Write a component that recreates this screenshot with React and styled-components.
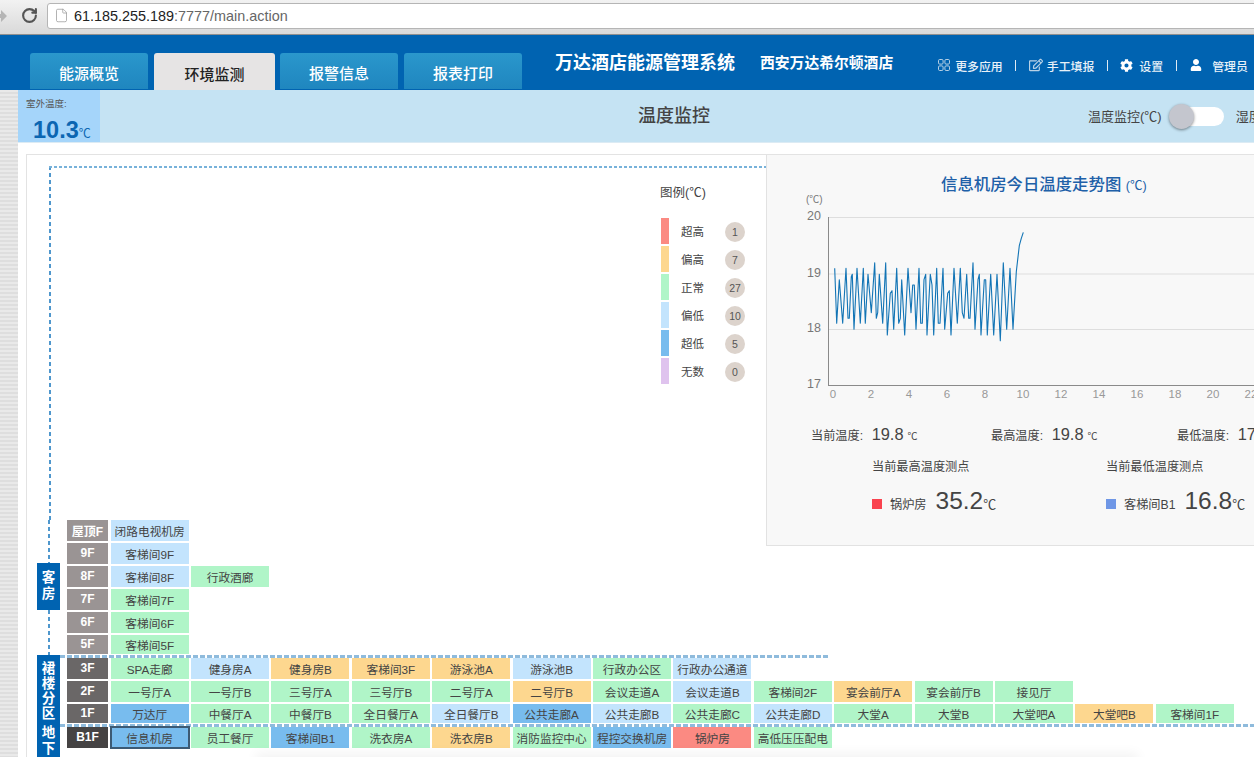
import React from 'react';
import styled, { createGlobalStyle } from 'styled-components';
import { FaCog, FaUser, FaRegEdit } from 'react-icons/fa';
import { RotateCw, File } from 'lucide-react';

const Global = createGlobalStyle`
  html, body { margin: 0; padding: 0; background: #fff; overflow: hidden; }
  * { box-sizing: border-box; }
  body { font-family: "Liberation Sans", "Noto Sans CJK SC", sans-serif; color: #444; }
`;

const COLORS = { R: '#fb8a82', O: '#fdd78f', G: '#b0f5c8', L: '#c3e4fd', B: '#78bcee', P: '#dfc3ee' };

const Page = styled.div`
  width: 1254px; height: 757px; overflow: hidden; position: relative;
  display: flex; flex-direction: column; background: #fff;
`;
const Browser = styled.div`
  height: 35px; flex: none; display: flex; align-items: center; padding-bottom: 3px;
  background: linear-gradient(#f2f2f2, #d9d9d9); border-bottom: 1px solid #8f8f8f; overflow: hidden;
`;
const BackArrow = styled.svg`width: 10px; height: 14px; margin-left: -3px; flex: none;`;
const Reload = styled(RotateCw)`margin-left: 14px; color: #555; flex: none;`;
const UrlBox = styled.div`
  margin-left: 9px; flex: 1; margin-right: -10px; height: 26px; background: #fff;
  border: 1px solid #b5b5b5; border-radius: 3px; display: flex; align-items: center; padding-left: 6px;
`;
const DocIcon = styled(File)`color: #999; flex: none;`;
const Url = styled.div`margin-left: 5px; font-size: 14.4px; color: #666; b { font-weight: 400; color: #222; }`;

const Header = styled.div`
  height: 55px; flex: none; background: #0063b1; display: flex; align-items: flex-end; padding-left: 30px; position: relative;
`;
const Tabs = styled.div`display: flex; gap: 6px;`;
const Tab = styled.div`
  width: ${p => (p.$active ? 121 : 118)}px; height: ${p => (p.$active ? 37 : 36)}px;
  margin-right: ${p => (p.$active ? -1 : 0)}px;
  border-radius: 3px 3px 0 0; display: flex; align-items: center; justify-content: center;
  font-size: 15px; padding-top: 3px; font-weight: 500;
  background: ${p => (p.$active ? '#e6e4e4' : 'linear-gradient(#2a97cc, #1f86bf)')};
  color: ${p => (p.$active ? '#222' : '#fff')};
`;
const Brand = styled.div`
  margin-left: 33px; align-self: flex-start; margin-top: 16px; font-size: 18px; font-weight: 700; color: #fff; line-height: 24px; white-space: nowrap;
`;
const Hotel = styled.div`
  margin-left: 25px; align-self: flex-start; margin-top: 17px; font-size: 14.8px; font-weight: 700; color: #fff; line-height: 22px; white-space: nowrap;
`;
const Nav = styled.div`
  margin-left: 45px; align-self: flex-start; margin-top: 21px; display: flex; align-items: center; height: 18px;
  color: #e8f1f8; font-size: 11.9px; font-weight: 500; white-space: nowrap;
`;
const NavItem = styled.div`display: flex; align-items: center; gap: ${p => p.$gap}px;`;
const NavSep = styled.div`width: 1px; height: 11px; background: #dfeaf3; margin: 0 ${p => p.$m}px;`;
const GridIcon = styled.svg`width: 12px; height: 12px; flex: none; color: #b9d2e6;`;

const Body = styled.div`flex: 1; display: flex; min-height: 0;`;
const Gutter = styled.div`
  width: 18px; flex: none;
  background: repeating-linear-gradient(180deg, #e9e9e9 0 2px, #dedede 2px 4px);
`;
const Main = styled.div`flex: 1; min-width: 0; display: flex; flex-direction: column; overflow: hidden;`;
const SubBar = styled.div`
  height: 53px; flex: none; display: flex; background: #c5e3f3; overflow: hidden; border-bottom: 1px solid #dcebf4;
`;
const Outdoor = styled.div`
  width: 82px; flex: none; background: #a5d5fa; padding: 8px 0 0 8px; position: relative;
`;
const OutdoorLabel = styled.div`font-size: 9.5px; color: #555; line-height: 12px;`;
const OutdoorValue = styled.div`
  margin: 7px 0 0 7px; color: #0b66b2; font-size: 23.5px; font-weight: 700; line-height: 26px; white-space: nowrap;
  span { font-size: 12px; font-weight: 400; }
`;
const SubTitle = styled.div`
  margin-left: 538px; width: 73px; flex: none; font-size: 18px; font-weight: 500; color: #444; line-height: 52px; white-space: nowrap;
`;
const Switcher = styled.div`
  margin-left: 377px; flex: none; display: flex; align-items: center; height: 52px; font-size: 13px; color: #444; white-space: nowrap;
`;
const SwitcherLabel = styled.span`margin-top: -1px;`;
const SwitchTrack = styled.div`
  width: 54px; height: 19px; background: #fff; border-radius: 10px; margin: 0 12px 0 8px; position: relative;
`;
const SwitchKnob = styled.div`
  position: absolute; left: -1px; top: -3px; width: 25px; height: 25px; border-radius: 50%;
  background: #c4c6ce; box-shadow: 0 1px 3px rgba(0,0,0,.45);
`;
const Content = styled.div`flex: 1; padding: 11px 0 0 8px; min-height: 0;`;
const Card = styled.div`
  height: 700px; width: 1400px; border: 1px solid #e3e3e3; border-right: 0;
  display: flex; flex-direction: column;
`;
const Top = styled.div`height: 365px; flex: none; display: flex;`;
const Canvas = styled.div`
  margin: 11px 0 0 22px; width: 717px; height: 354px; flex: none; padding: 18px 0 0 612px; position: relative;
  background:
    repeating-linear-gradient(90deg, #78b2da 0 3px, transparent 3px 5px) top left / 100% 2px no-repeat,
    repeating-linear-gradient(180deg, #4f97cd 0 4px, transparent 4px 7px) top left / 2px 100% no-repeat;
`;
const LegendTitle = styled.div`margin-left: -1px; font-size: 12.5px; color: #444; line-height: 18px; white-space: nowrap;`;
const Legend = styled.div`margin-top: 16px; display: flex; flex-direction: column; gap: 2px;`;
const LegendRow = styled.div`display: flex; align-items: center; height: 26px;`;
const LegendBar = styled.div`width: 8px; height: 26px; background: ${p => p.$c};`;
const LegendLabel = styled.div`margin-left: 12px; width: 44px; font-size: 11.5px; color: #444;`;
const LegendBadge = styled.div`
  width: 20px; height: 20px; border-radius: 50%; background: #dcd3cc; font-size: 10.5px; color: #555;
  display: flex; align-items: center; justify-content: center; margin-top: 1px;
`;

const ChartPanel = styled.div`
  width: 560px; height: 391px; flex: none; background: #f8f8f8;
  border-left: 1px solid #e2e2e2; border-bottom: 1px solid #e2e2e2; position: relative; z-index: 1;
`;
const ChartTitle = styled.div`
  margin-top: 17px; padding-left: 174px; font-size: 16.4px; font-weight: 500; color: #2060a8; line-height: 24px; white-space: nowrap;
  span { font-size: 12.5px; font-weight: 400; }
`;
const ChartSvg = styled.svg`display: block; margin: -8px 0 0 23px; width: 530px; height: 215px;`;
const Stats = styled.div`display: flex; margin-top: 20px; padding-left: 44px; align-items: baseline;`;
const Stat = styled.div`width: ${p => p.$w}px; flex: none; font-size: 12.2px; color: #444; white-space: nowrap;
  b { font-weight: 400; font-size: 16.4px; margin: 0 4px 0 8.5px; }
  i { font-style: normal; font-size: 10px; }
`;
const Extremes = styled.div`display: flex; padding-left: 105px; margin-top: 15px;`;
const Extreme = styled.div`width: 234px; flex: none;`;
const ExtremeTitle = styled.div`font-size: 12.2px; color: #444; line-height: 16px; white-space: nowrap;`;
const ExtremeRow = styled.div`display: flex; align-items: baseline; margin-top: 12px; white-space: nowrap; position: relative;`;
const Swatch = styled.div`width: 10px; height: 10px; background: ${p => p.$c}; margin-right: 8px; flex: none;`;
const ExtremeName = styled.div`font-size: 12.2px; color: #444;`;
const ExtremeValue = styled.div`margin-left: 9px; font-size: 24.5px; color: #444; line-height: 28px;`;
const ExtremeUnit = styled.div`font-size: 13px; color: #444;`;

const Section = styled.div`display: flex; flex: none; height: ${p => p.$h}px; margin-left: 10px;`;
const ZoneCol = styled.div`width: 23px; flex: none; display: flex; flex-direction: column;`;
const DashStem = styled.div`
  height: ${p => p.$h}px; flex: none; margin-left: 11px; width: 2px;
  background: repeating-linear-gradient(180deg, #4f97cd 0 4px, transparent 4px 7px);
`;
const Zone = styled.div`
  width: 23px; flex: ${p => (p.$h ? 'none' : 1)}; height: ${p => (p.$h ? `${p.$h}px` : 'auto')}; background: #0063b1; color: #fff; text-align: center;
  font-size: 13.5px; font-weight: 700; line-height: ${p => p.$lh}px; padding: ${p => p.$pt}px 4px 0;
`;
const Rows = styled.div`flex: 1; min-width: 0; display: flex; flex-direction: column;`;
const Divider = styled.div`
  height: 3px; flex: none; width: ${p => p.$w}px;
  background: repeating-linear-gradient(90deg, #8fbbdc 0 5px, transparent 5px 7px);
`;
const RowList = styled.div`padding-left: 7px; display: flex; flex-direction: column; gap: 2px;`;
const Row = styled.div`display: flex; height: ${p => p.$h || 21}px; gap: 2.4px;`;
const Floor = styled.div`
  width: 41px; margin-right: 0.3px; flex: none; background: ${p => p.$bg}; color: #fff; font-weight: 700; padding-bottom: 1px;
  font-size: 12px; display: flex; align-items: center; justify-content: center; white-space: nowrap;
`;
const Cell = styled.div`
  width: 78px; flex: none; background: ${p => COLORS[p.$c]}; color: #444; font-size: 11.7px; padding-bottom: 1px;
  display: flex; align-items: center; justify-content: center; white-space: nowrap;
  ${p => p.$sel && 'box-shadow: inset 0 0 0 1px #3c5a74; outline: 1px solid #3c5a74;'}
`;
const BottomShade = styled.div`
  position: absolute; left: 260px; right: 120px; bottom: -6px; height: 6px; pointer-events: none;
  box-shadow: 0 0 12px 4px rgba(0,0,0,.05);
`;

const upper = [
  ['屋顶F', [['闭路电视机房', 'L']]],
  ['9F', [['客梯间9F', 'L']]],
  ['8F', [['客梯间8F', 'L'], ['行政酒廊', 'G']]],
  ['7F', [['客梯间7F', 'G']]],
  ['6F', [['客梯间6F', 'G']]],
  ['5F', [['客梯间5F', 'G']], 19],
];
const podium = [
  ['3F', [['SPA走廊','G'],['健身房A','L'],['健身房B','O'],['客梯间3F','O'],['游泳池A','O'],['游泳池B','L'],['行政办公区','G'],['行政办公通道','L']]],
  ['2F', [['一号厅A','G'],['一号厅B','G'],['三号厅A','G'],['三号厅B','G'],['二号厅A','G'],['二号厅B','O'],['会议走道A','G'],['会议走道B','L'],['客梯间2F','G'],['宴会前厅A','O'],['宴会前厅B','G'],['接见厅','G']]],
  ['1F', [['万达厅','B'],['中餐厅A','G'],['中餐厅B','G'],['全日餐厅A','G'],['全日餐厅B','L'],['公共走廊A','B'],['公共走廊B','L'],['公共走廊C','G'],['公共走廊D','L'],['大堂A','G'],['大堂B','G'],['大堂吧A','G'],['大堂吧B','O'],['客梯间1F','G']], 19],
];
const basement = [
  ['B1F', [['信息机房','B',true],['员工餐厅','G'],['客梯间B1','B'],['洗衣房A','G'],['洗衣房B','O'],['消防监控中心','G'],['程控交换机房','B'],['锅炉房','R'],['高低压压配电','G']]],
];

const legend = [['超高','R',1],['偏高','O',7],['正常','G',27],['偏低','L',10],['超低','B',5],['无数','P',0]];

const raw = [[44,190],[50,355],[58,224],[68,355],[78,190],[84,340],[88,340],[94,215],[97,208],[102,373],[111,190],[121,355],[130,190],[136,355],[144,208],[154,323],[164,173],[169,340],[173,323],[178,208],[188,355],[197,173],[202,390],[211,265],[216,257],[221,373],[230,190],[236,355],[241,340],[245,224],[254,390],[264,190],[273,323],[278,240],[283,240],[288,373],[297,190],[302,355],[307,355],[312,224],[317,208],[321,390],[331,208],[336,240],[341,390],[350,190],[355,355],[360,355],[369,190],[374,373],[383,265],[388,257],[393,390],[402,190],[412,355],[421,190],[427,323],[432,340],[440,208],[446,340],[450,340],[459,173],[465,373],[474,224],[478,208],[483,390],[493,224],[497,224],[502,390],[512,208],[521,390],[531,208],[541,407],[550,173],[560,373],[570,190],[579,373],[589,200],[598,122],[604,100],[610,82]];
const OX = 790, OY = 190;
const linePts = raw.map(([x, y]) => `${(x / 3 + 820 - OX).toFixed(1)},${(y / 3 + 205 - OY).toFixed(1)}`).join(' ');
const yTicks = [[20, 217.5], [19, 274], [18, 329.5], [17, 385.5]];
const xTicks = Array.from({ length: 12 }, (_, i) => i * 2);

function FloorRows({ rows }) {
  return (
    <RowList>
      {rows.map(([f, cells, h]) => (
        <Row key={f} $h={h}>
          <Floor $bg={f === 'B1F' ? '#454343' : /^[123]F$/.test(f) ? '#6a6767' : '#9a9494'}>{f}</Floor>
          {cells.map(([t, c, sel]) => <Cell key={t} $c={c} $sel={sel}>{t}</Cell>)}
        </Row>
      ))}
    </RowList>
  );
}

export default function App() {
  return (
    <Page>
      <Global />
      <Browser>
        <BackArrow viewBox="0 0 10 14"><path d="M0 5h4V1l6 6-6 6V9H0z" fill="#b5b5b5" /></BackArrow>
        <Reload size={17} strokeWidth={3} />
        <UrlBox>
          <DocIcon size={15} strokeWidth={1.2} />
          <Url><b>61.185.255.189</b>:7777/main.action</Url>
        </UrlBox>
      </Browser>
      <Header>
        <Tabs>
          <Tab>能源概览</Tab>
          <Tab $active>环境监测</Tab>
          <Tab>报警信息</Tab>
          <Tab>报表打印</Tab>
        </Tabs>
        <Brand>万达酒店能源管理系统</Brand>
        <Hotel>西安万达希尔顿酒店</Hotel>
        <Nav>
          <NavItem $gap={5}>
            <GridIcon viewBox="0 0 12 12" fill="none" stroke="currentColor" strokeWidth="1">
              <rect x=".5" y=".5" width="4.6" height="4.6" rx="1.2" />
              <rect x="6.9" y=".5" width="4.6" height="4.6" rx="1.2" />
              <rect x=".5" y="6.9" width="4.6" height="4.6" rx="1.2" />
              <rect x="6.9" y="6.9" width="4.6" height="4.6" rx="1.2" />
            </GridIcon>
            更多应用
          </NavItem>
          <NavSep $m={12.5} />
          <NavItem $gap={4}><FaRegEdit size={14} color="#b9d2e6" />手工填报</NavItem>
          <NavSep $m={12.5} />
          <NavItem $gap={6}><FaCog size={13} color="#fff" />设置</NavItem>
          <NavSep $m={13} />
          <NavItem $gap={10}><FaUser size={12} color="#fff" />管理员</NavItem>
        </Nav>
      </Header>
      <Body>
        <Gutter />
        <Main>
          <SubBar>
            <Outdoor>
              <OutdoorLabel>室外温度:</OutdoorLabel>
              <OutdoorValue>10.3<span>℃</span></OutdoorValue>
            </Outdoor>
            <SubTitle>温度监控</SubTitle>
            <Switcher>
              <SwitcherLabel>温度监控(℃)</SwitcherLabel>
              <SwitchTrack><SwitchKnob /></SwitchTrack>
              <SwitcherLabel>湿度监控(%)</SwitcherLabel>
            </Switcher>
          </SubBar>
          <Content>
            <Card>
              <Top>
                <Canvas>
                  <LegendTitle>图例(℃)</LegendTitle>
                  <Legend>
                    {legend.map(([t, c, n]) => (
                      <LegendRow key={t}>
                        <LegendBar $c={COLORS[c]} />
                        <LegendLabel>{t}</LegendLabel>
                        <LegendBadge>{n}</LegendBadge>
                      </LegendRow>
                    ))}
                  </Legend>
                </Canvas>
                <ChartPanel>
                  <ChartTitle>信息机房今日温度走势图 <span>(℃)</span></ChartTitle>
                  <ChartSvg viewBox="0 0 530 215">
                    {yTicks.map(([v, y]) => (
                      <g key={v}>
                        <line x1={38} x2={530} y1={y - OY} y2={y - OY} stroke={v === 17 ? '#8a8a8a' : '#dedede'} strokeWidth="1" />
                        <text x={31} y={y - OY + 2.5} textAnchor="end" fontSize="12.5" fill="#777">{v}</text>
                      </g>
                    ))}
                    <text x={16} y={13} fontSize="10" fill="#777">(℃)</text>
                    <line x1={38.5} x2={38.5} y1={27} y2={196} stroke="#8a8a8a" strokeWidth="1" />
                    {xTicks.map(h => (
                      <text key={h} x={43 + h * 19} y={208} textAnchor="middle" fontSize="11.5" fill="#999">{h}</text>
                    ))}
                    <polyline points={linePts} fill="none" stroke="#1274b5" strokeWidth="1.1" strokeLinejoin="round" />
                  </ChartSvg>
                  <Stats>
                    <Stat $w={180}>当前温度:<b>19.8</b><i>℃</i></Stat>
                    <Stat $w={186}>最高温度:<b>19.8</b><i>℃</i></Stat>
                    <Stat $w={120}>最低温度:<b>17.8</b><i>℃</i></Stat>
                  </Stats>
                  <Extremes>
                    <Extreme>
                      <ExtremeTitle>当前最高温度测点</ExtremeTitle>
                      <ExtremeRow>
                        <Swatch $c="#f9434f" /><ExtremeName>锅炉房</ExtremeName>
                        <ExtremeValue>35.2</ExtremeValue><ExtremeUnit>℃</ExtremeUnit>
                      </ExtremeRow>
                    </Extreme>
                    <Extreme>
                      <ExtremeTitle>当前最低温度测点</ExtremeTitle>
                      <ExtremeRow>
                        <Swatch $c="#6f97e6" /><ExtremeName>客梯间B1</ExtremeName>
                        <ExtremeValue>16.8</ExtremeValue><ExtremeUnit>℃</ExtremeUnit>
                      </ExtremeRow>
                    </Extreme>
                  </Extremes>
                </ChartPanel>
              </Top>
              <Section $h={135}>
                <ZoneCol>
                  <DashStem $h={43} />
                  <Zone $h={47} $lh={16} $pt={7}>客房</Zone>
                  <DashStem $h={45} />
                </ZoneCol>
                <Rows><FloorRows rows={upper} /></Rows>
              </Section>
              <Section $h={69}>
                <ZoneCol><Zone $lh={15} $pt={6}>裙楼分区</Zone></ZoneCol>
                <Rows>
                  <Divider $w={770} />
                  <FloorRows rows={podium} />
                </Rows>
              </Section>
              <Section $h={40}>
                <ZoneCol><Zone $lh={16} $pt={1}>地下</Zone></ZoneCol>
                <Rows>
                  <Divider $w={1200} />
                  <FloorRows rows={basement} />
                </Rows>
              </Section>
            </Card>
          </Content>
        </Main>
      </Body>
      <BottomShade />
    </Page>
  );
}
